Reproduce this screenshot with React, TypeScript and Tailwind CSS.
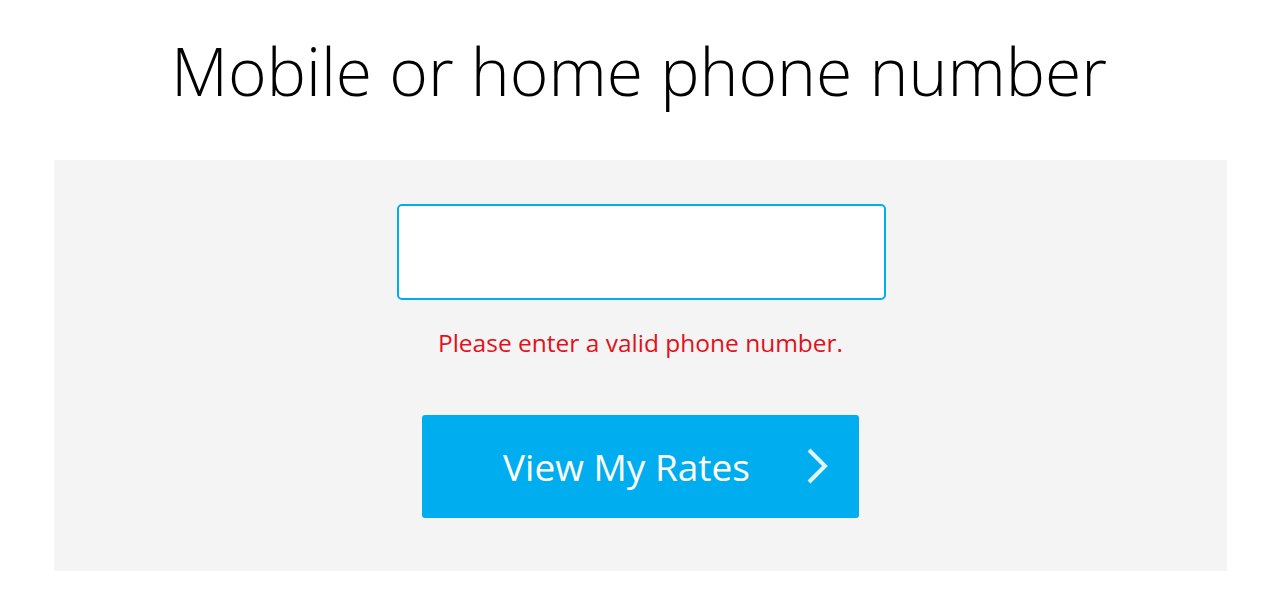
export default function App() {
  return (
    <div className="w-[1278px] h-[611px] bg-white flex flex-col items-center" style={{ fontFamily: '"Open Sans", sans-serif' }}>
      <h1 className="mt-[24px] h-[136px] text-[66px] font-light leading-[92px] text-black">Mobile or home phone number</h1>
      <div className="self-start ml-[54px] w-[1173px] h-[411px] bg-[#f4f4f4] flex flex-col items-center">
        <input className="mt-[44px] ml-[2px] w-[489px] h-[96px] bg-white border-2 border-[#00aeef] rounded-[5px] outline-none" />
        <p className="mt-[27px] text-[24.5px] leading-[32px] text-[#e2111b]">Please enter a valid phone number.</p>
        <button className="mt-[56px] w-[437px] h-[103px] bg-[#00aeef] rounded-[3px] relative flex items-center justify-center text-white text-[37px]">
          <span className="-ml-[28px]">View My Rates</span>
          <svg className="absolute left-[381px] top-[32px]" width="28" height="38" viewBox="0 0 28 38" fill="none">
            <path d="M6 3 L22 19 L6 35" stroke="#e3f5fc" strokeWidth="4" />
          </svg>
        </button>
      </div>
    </div>
  );
}
